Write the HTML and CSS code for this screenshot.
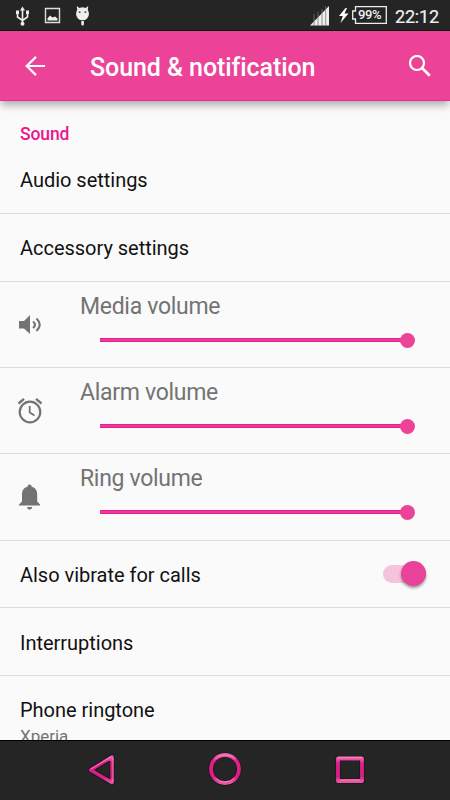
FILE: index.html
```
<!DOCTYPE html>
<html lang="en">
<head>
<meta charset="utf-8">
<title>Sound &amp; notification</title>
<link rel="stylesheet" href="styles.css">
</head>
<body>
<div class="screen">
  <header class="status">
    <svg class="status-left" width="100" height="30" viewBox="0 0 100 30">
      <g fill="none" stroke="#eee" stroke-width="1.6">
        <path d="M22.500 9V24M17.500 12.500V17L22.500 20.500L27.500 17V12.500"/>
        <path d="M45.500 8.500H59.500V22.500H45.500Z" stroke="#ddd" stroke-width="1.400"/>
      </g>
      <g fill="#eee">
        <path d="M22.500 6.500L25 10.500H20ZM16 10.500H19V14H16ZM26 10.500H29V14H26Z"/>
        <circle cx="22.500" cy="23.800" r="2"/>
        <path d="M47.500 20.500V18.500L50 15.500L52.500 17.500L55 16.500L57.500 18.500V20.500Z"/>
        <circle cx="82.500" cy="13.800" r="6.500"/>
        <path d="M76.700 6L80 8.500L77.500 11ZM88.300 6L85 8.500L87.500 11ZM81.300 21H83.900V24.300Q83.900 25.500 82.600 25.500Q81.300 25.500 81.300 24.300Z"/>
      </g>
      <path d="M78.700 11.500H80.500V12.800H78.700ZM84.500 11.500H86.300V12.800H84.500Z" fill="#252525"/>
    </svg>
    <svg class="signal" width="20" height="20" viewBox="0 0 20 20"><path d="M0 19.500L19 0V19.500Z" fill="#eee"/><path d="M4 8V20M8 6V20M12 3V20M15.700 0V20" stroke="#777" stroke-width=".8"/></svg>
    <svg class="bolt" width="10" height="15" viewBox="0 0 10 15"><path d="M6.500 0L0 8H3.800L1.500 15L9.500 5.500H5.500L8 0Z" fill="#fff"/></svg>
    <div class="battery">
      <svg width="35" height="18" viewBox="0 0 35 18"><path d="M3.500 .7H34.300V17.300H3.500V13H.7V5H3.500Z" fill="none" stroke="#eee" stroke-width="1.300"/></svg>
      <span class="battery-text">99%</span>
    </div>
    <span class="clock">22:12</span>
  </header>

  <div class="appbar">
    <svg class="back" width="20" height="20" viewBox="0 0 20 20"><path d="M11 .9L1.700 10L11 19.100M2 10H20" fill="none" stroke="#fff" stroke-width="2.200"/></svg>
    <h1 class="title">Sound &amp; notification</h1>
    <svg class="search" width="22" height="22" viewBox="0 0 22 22"><g fill="none" stroke="#fff" stroke-width="2.200"><circle cx="8" cy="8" r="7"/><path d="M12.800 12.800L20.800 20.800" stroke-width="2.700"/></g></svg>
  </div>

  <main class="content">
    <h2 class="section">Sound</h2>
    <div class="row"><span class="label">Audio settings</span></div>
    <div class="row"><span class="label">Accessory settings</span></div>
    <div class="volume">
      <svg class="icon" width="30" height="30" viewBox="0 0 30 30"><path d="M4 11H9L15 5V24L9 18.500H4Z" fill="#737373"/><path d="M18 11.500Q22 14.800 18 18M21.500 8.500Q28 14.800 21.500 21" fill="none" stroke="#737373" stroke-width="2.200"/></svg>
      <div class="control"><span class="name">Media volume</span><div class="slider"><i class="thumb"></i></div></div>
    </div>
    <div class="volume">
      <svg class="icon" width="30" height="30" viewBox="0 0 30 30"><g fill="none" stroke="#737373"><circle cx="15" cy="16" r="10.300" stroke-width="2.200"/><path d="M3.500 7.500L9 2.900M26.500 7.500L21 2.900" stroke-width="2.300"/><path d="M14.700 10V16.500L19.500 19.400" stroke-width="1.800"/></g></svg>
      <div class="control"><span class="name">Alarm volume</span><div class="slider"><i class="thumb"></i></div></div>
    </div>
    <div class="volume ring">
      <svg class="icon" width="30" height="30" viewBox="0 0 30 30"><path d="M12.500 4.800Q12.500 2.500 14.600 2.500Q16.700 2.500 16.700 4.800C20.500 5.800 22.200 8.500 22.200 12.500V19.500L25 22.500V23.600H4V22.500L7 19.500V12.500C7 8.500 8.700 5.800 12.500 4.800ZM12 25H17.200Q17 27.500 14.600 27.500Q12.200 27.500 12 25Z" fill="#737373"/></svg>
      <div class="control"><span class="name">Ring volume</span><div class="slider"><i class="thumb"></i></div></div>
    </div>
    <div class="row vibrate"><span class="label">Also vibrate for calls</span><div class="switch"><i class="knob"></i></div></div>
    <div class="row low"><span class="label">Interruptions</span></div>
    <div class="ringtone"><span class="label">Phone ringtone</span><span class="sub">Xperia</span></div>
  </main>

  <nav class="navbar">
    <svg width="450" height="59" viewBox="0 0 450 59">
      <defs><linearGradient id="metal" x1="0" y1="0" x2="0" y2="1"><stop offset="0" stop-color="#ec5ca8"/><stop offset=".22" stop-color="#e11f8a"/><stop offset=".8" stop-color="#dc1c86"/><stop offset="1" stop-color="#e655a2"/></linearGradient></defs>
      <g fill="none" stroke-linejoin="round">
        <g stroke="#151515" stroke-width="5"><path d="M90.500 29L112 16V41.500Z"/><circle cx="225" cy="28" r="14"/><path d="M338 17.500H362V40H338Z"/></g>
        <g stroke="url(#metal)" stroke-width="3.800"><path d="M90.500 29L112 16V41.500Z" stroke-width="3.400"/><circle cx="225" cy="28" r="14"/><path d="M338 17.500H362V40H338Z"/></g>
        <path d="M91 28L111 15.700M113 17V41M215 18A14.500 14.500 0 0 1 235 18M215.500 37A13 13 0 0 0 234.500 37M338 16.300H362M340 39H360" stroke="#f7a5ce" stroke-width=".7"/>
      </g>
    </svg>
  </nav>
</div>
</body>
</html>
```
FILE: styles.css
```
* { box-sizing: border-box; }
body { margin: 0; font-family: Roboto, sans-serif; background: #fafafa; }
.screen { width: 450px; height: 800px; display: flex; flex-direction: column; overflow: hidden; }
svg { display: block; flex: none; }

.status { height: 31px; flex: none; display: flex; align-items: flex-start; background: #252525; border-bottom: 1px solid #101810; color: #f0f0f0; }
.signal { margin: 6px 0 0 210px; }
.bolt { margin: 8px 0 0 9px; }
.battery { display: grid; width: 35px; height: 18px; margin: 6px 0 0 3px; }
.battery > * { grid-area: 1 / 1; }
.battery-text { font-size: 13px; font-weight: 500; line-height: 18px; padding-left: 6px; letter-spacing: -.4px; white-space: nowrap; }
.clock { font-size: 18px; line-height: 22px; margin: 6px 0 0 8px; letter-spacing: -.2px; -webkit-text-stroke: .2px #f0f0f0; }

.appbar { height: 70px; flex: none; display: flex; align-items: center; background: #ec4399; border-bottom: 1px solid #e72c8c; box-shadow: 0 5px 8px -1px rgba(0,0,0,.32); position: relative; z-index: 1; color: #fff; }
.back { margin: 1px 0 0 25px; }
.title { margin: 4px 0 0 45px; font-size: 25px; font-weight: 500; line-height: 32px; letter-spacing: -.08px; width: 319px; white-space: nowrap; }
.search { margin-top: 1px; }

.content { height: 639px; flex: none; overflow: hidden; background: #fafafa; }
.section { margin: 0; padding: 23px 0 0 20px; height: 45px; font-size: 17.500px; line-height: 20px; letter-spacing: -.1px; font-weight: 500; color: #ec1491; }
.row { height: 68px; display: flex; align-items: center; justify-content: space-between; padding: 0 24px 0 20px; border-bottom: 1px solid #dcdcdc; }
.label { font-size: 20px; line-height: 24px; letter-spacing: -.02px; color: #111; white-space: nowrap; }
.volume { height: 86px; display: flex; border-bottom: 1px solid #dcdcdc; }
.icon { margin: 28px 0 0 15px; }
.control { margin-left: 35px; padding-top: 11px; }
.name { display: block; font-size: 23px; line-height: 28px; letter-spacing: -.3px; color: #737373; white-space: nowrap; }
.slider { width: 307px; height: 4px; margin: 17px 0 0 20px; background: #ec3a99; border-top: 1px solid #e91e90; border-bottom: 1px solid #e91e90; display: flex; align-items: center; justify-content: flex-end; }
.thumb { flex: none; width: 15px; height: 15px; margin-right: -8px; border-radius: 50%; background: #ec4399; }
.ring { height: 87px; }
.vibrate { height: 67px; padding-top: 2px; }
.low { padding-top: 2px; }
.switch { width: 43px; height: 18px; margin-bottom: 3px; border-radius: 9px; background: #f6c3de; display: flex; align-items: center; justify-content: flex-end; }
.knob { width: 25px; height: 25px; flex: none; border-radius: 50%; background: #e84398; box-shadow: 0 2px 3px rgba(0,0,0,.4); }
.ringtone { display: flex; flex-direction: column; padding: 22px 20px 0; }
.sub { margin-top: 4px; font-size: 17px; line-height: 20px; color: #737373; }

.navbar { height: 60px; flex: none; background: #252525; border-top: 1px solid #000; }
```
